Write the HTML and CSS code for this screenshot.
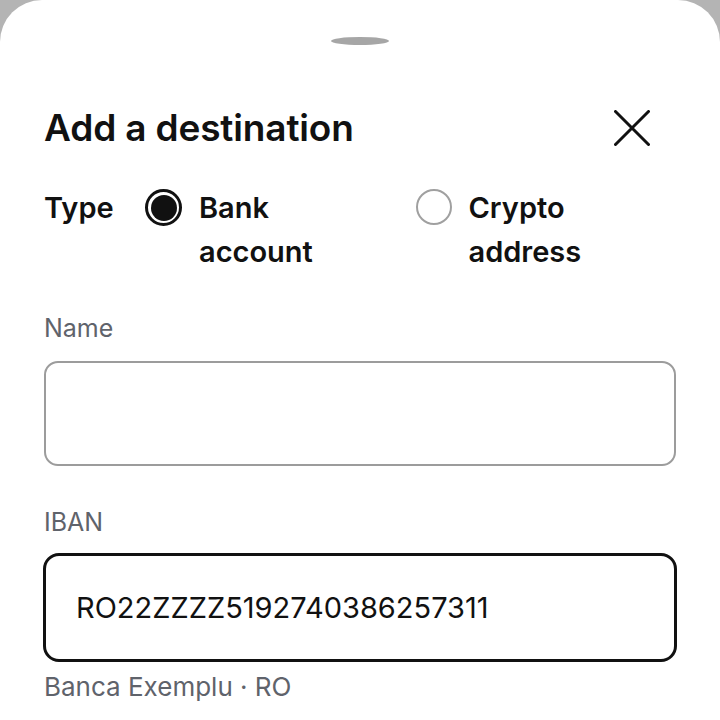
FILE: index.html
```html
<!DOCTYPE html>
<html lang="en">
<head>
<meta charset="utf-8">
<title>Add a destination</title>
<link rel="stylesheet" href="styles.css">
</head>
<body>
<div class="sheet">
  <div class="handle"></div>
  <div class="header">
    <h1 class="title">Add a destination</h1>
    <button class="close" aria-label="Close">
      <svg width="36" height="36" viewBox="0 0 36 36"><path d="M1.5 1.5 L34.5 34.5 M34.5 1.5 L1.5 34.5" stroke="#111" stroke-width="3" stroke-linecap="round" fill="none"/></svg>
    </button>
  </div>
  <div class="type-row">
    <div class="type-label">Type</div>
    <div class="options">
      <label class="option">
        <span class="radio radio-on"><span class="dot"></span></span>
        <span class="opt-text">Bank account</span>
      </label>
      <label class="option">
        <span class="radio radio-off"></span>
        <span class="opt-text">Crypto address</span>
      </label>
    </div>
  </div>
  <div class="field">
    <div class="label">Name</div>
    <div class="input"></div>
  </div>
  <div class="field field-iban">
    <div class="label">IBAN</div>
    <div class="input input-focus">RO22ZZZZ5192740386257311</div>
    <div class="helper">Banca Exemplu · RO</div>
  </div>
</div>
</body>
</html>
```
FILE: styles.css
```css
html, body {
  margin: 0;
  padding: 0;
  background: #b4b4b4;
}
body {
  font-family: Inter, "Noto Sans", "Liberation Sans", sans-serif;
  color: #111;
}
.sheet {
  background: #fff;
  border-radius: 42px 42px 0 0;
  min-height: 720px;
  padding: 37px 44px 0 44px;
  box-sizing: border-box;
}
.handle {
  width: 58px;
  height: 8px;
  border-radius: 50%;
  background: #a6a6a6;
  margin: 0 auto;
}
.header {
  display: flex;
  align-items: center;
  justify-content: space-between;
  margin-top: 61px;
  height: 44px;
}
.title {
  margin: 0;
  font-size: 37px;
  line-height: 44px;
  font-weight: 600;
  letter-spacing: -0.15px;
  padding-left: 0;
}
.close {
  border: 0;
  background: none;
  padding: 0;
  margin-right: 26px;
  width: 36px;
  height: 36px;
  display: flex;
}
.type-row {
  display: grid;
  grid-template-columns: 101px 1fr;
  margin-top: 36px;
  font-size: 29px;
  line-height: 44px;
  font-weight: 600;
}
.type-label {
  padding-left: 0;
}
.options {
  display: grid;
  grid-template-columns: 1fr 1fr;
  column-gap: 8px;
}
.option {
  display: flex;
  align-items: flex-start;
  gap: 17px;
}
.opt-text {
  max-width: 150px;
}
.radio {
  flex: none;
  width: 37px;
  height: 37px;
  box-sizing: border-box;
  border-radius: 50%;
  margin-top: 3px;
  display: flex;
  align-items: center;
  justify-content: center;
}
.radio-on {
  border: 3px solid #111;
}
.radio-on .dot {
  width: 26px;
  height: 26px;
  border-radius: 50%;
  background: #111;
}
.radio-off {
  width: 36px;
  height: 36px;
  margin-left: 1px;
  border: 2px solid #a0a0a0;
}
.field {
  margin-top: 38px;
}
.field-iban {
  margin-top: 40px;
}
.label {
  font-size: 25px;
  line-height: 32px;
  color: #5f636b;
}
.input {
  margin-top: 17px;
  height: 105px;
  border: 2px solid #9c9c9c;
  border-radius: 14px;
  box-sizing: border-box;
}
.input-focus {
  margin: 15px -1px 0 -1px;
  height: 109px;
  border: 3px solid #111;
  border-radius: 16px;
  display: flex;
  align-items: center;
  padding-left: 30px;
  font-size: 29px;
  color: #111;
}
.helper {
  margin-top: 9px;
  font-size: 26px;
  line-height: 32px;
  color: #5f636b;
}
```
